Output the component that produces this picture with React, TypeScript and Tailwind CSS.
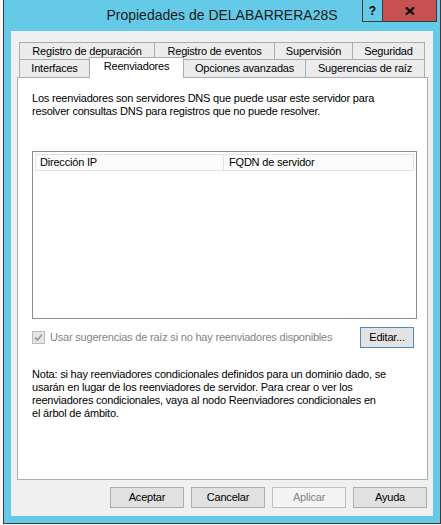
import React from 'react';

const topTabs = [
  { label: 'Registro de depuración', w: 'w-[135px]' },
  { label: 'Registro de eventos', w: 'w-[120px]' },
  { label: 'Supervisión', w: 'w-[78px]' },
  { label: 'Seguridad', w: 'w-[73px] border-r' },
];

function CaptionButtons() {
  return (
    <div className="absolute top-0 right-[3px] flex border-x border-b border-[#3b3b3b]">
      <div className="w-[20px] h-[21px] flex items-center justify-center border-r border-[#3b3b3b] text-[12px] font-bold tracking-normal text-black">
        ?
      </div>
      <div className="w-[53px] h-[21px] bg-[#c75050] flex items-center justify-center">
        <svg width="10" height="8" viewBox="0 0 10 8">
          <path d="M1 0.5 L9 7.5 M9 0.5 L1 7.5" stroke="#000" strokeWidth={2.2} />
        </svg>
      </div>
    </div>
  );
}

function Button({ label, disabled, primary, className = '' }: { label: string; disabled?: boolean; primary?: boolean; className?: string }) {
  const tone = disabled
    ? 'bg-[#f4f4f4] border-[#bfbfbf] text-[#838383]'
    : primary
    ? 'bg-[#e3e3e3] border-[#4f8ac0] text-black'
    : 'bg-[#e1e1e1] border-[#adadad] text-black';
  return (
    <div className={`h-[21px] border flex items-center justify-center leading-[13px] ${tone} ${className}`}>
      {label}
    </div>
  );
}

export default function App() {
  return (
    <div className="w-[441px] h-[525px] flex bg-[#f3f3f3] overflow-hidden font-['Liberation_Sans',Arial,sans-serif] text-[11px] tracking-[-0.2px] text-black">
      <div className="w-[3px] h-full bg-[#f7f7f7]" />

      {/* window frame */}
      <div className="w-[438px] h-[524px] bg-[#65c9e8] border-x border-b border-[#3b3b3b] flex flex-col">
        <div className="relative h-[31px] flex items-center justify-center">
          <span className="text-[14px] tracking-normal text-[#1c1c1c]">Propiedades de DELABARRERA28S</span>
          <CaptionButtons />
        </div>

        {/* client area */}
        <div className="ml-[7px] w-[422px] h-[485px] bg-[#f0f0f0] pt-[11px] flex flex-col">
          {/* tabs */}
          <div className="ml-[8px] flex flex-col">
            <div className="flex h-[17px]">
              {topTabs.map(t => (
                <div
                  key={t.label}
                  className={`${t.w} h-[17px] border-t border-l border-[#acacac] bg-[#ececec] flex items-center justify-center leading-[13px]`}
                >
                  {t.label}
                </div>
              ))}
            </div>
            <div className="flex h-[18px] items-start">
              <div className="w-[70px] h-[18px] border-t border-l border-[#acacac] bg-[#ececec] flex items-center justify-center leading-[13px]">
                Interfaces
              </div>
              <div className="relative z-10 -mt-[2px] w-[95px] h-[21px] border-t border-x border-[#acacac] bg-white flex justify-center pt-[2px] leading-[13px]">
                Reenviadores
              </div>
              <div className="w-[121px] h-[18px] border-t border-[#acacac] bg-[#ececec] flex items-center justify-center leading-[13px]">
                Opciones avanzadas
              </div>
              <div className="w-[120px] h-[18px] border-t border-x border-[#acacac] bg-[#ececec] flex items-center justify-center leading-[13px]">
                Sugerencias de raíz
              </div>
            </div>
          </div>

          {/* tab page */}
          <div className="ml-[6px] w-[411px] h-[403px] bg-white border border-[#acacac] pl-[14px] pt-[14px] flex flex-col">
            <p className="leading-[13px] whitespace-nowrap">
              Los reenviadores son servidores DNS que puede usar este servidor para
              <br />
              resolver consultas DNS para registros que no puede resolver.
            </p>

            <div className="mt-[33px] w-[385px] h-[168px] border border-[#8d8d8d] p-[2px]">
              <div className="flex h-[17px] border border-[#e3e3e3] bg-[#fbfbfb] leading-[13px]">
                <div className="w-[188px] border-r border-[#e3e3e3] pl-[4px] flex items-center">Dirección IP</div>
                <div className="flex-1 pl-[5px] flex items-center">FQDN de servidor</div>
              </div>
            </div>

            <div className="mt-[8px] w-[385px] h-[21px] flex items-center">
              <div className="w-[13px] h-[13px] border border-[#bcbcbc] bg-[#e6e6e6] flex items-center justify-center">
                <svg width="11" height="11" viewBox="0 0 11 11">
                  <path d="M2 5.5 L4.5 8 L9 2.5" fill="none" stroke="#9c9c9c" strokeWidth={1.8} />
                </svg>
              </div>
              <span className="ml-[5px] text-[#838383] leading-[13px] whitespace-nowrap">
                Usar sugerencias de raíz si no hay reenviadores disponibles
              </span>
              <Button label="Editar..." primary className="ml-auto mr-[3px] w-[54px]" />
            </div>

            <p className="mt-[20px] leading-[13px] whitespace-nowrap">
              Nota: si hay reenviadores condicionales definidos para un dominio dado, se
              <br />
              usarán en lugar de los reenviadores de servidor. Para crear o ver los
              <br />
              reenviadores condicionales, vaya al nodo Reenviadores condicionales en
              <br />
              el árbol de ámbito.
            </p>
          </div>

          {/* dialog buttons */}
          <div className="mt-[7px] pr-[6px] flex justify-end gap-[7px]">
            <Button label="Aceptar" className="w-[74px]" />
            <Button label="Cancelar" className="w-[74px]" />
            <Button label="Aplicar" disabled className="w-[74px]" />
            <Button label="Ayuda" className="w-[74px]" />
          </div>
        </div>
      </div>
    </div>
  );
}
